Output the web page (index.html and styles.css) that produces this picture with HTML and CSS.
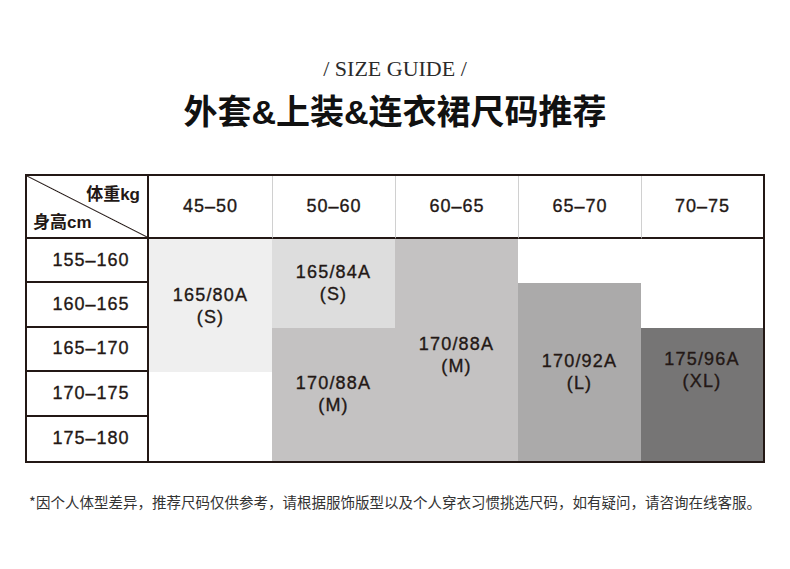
FILE: index.html
```html
<!DOCTYPE html>
<html lang="zh-CN">
<head>
<meta charset="utf-8">
<title>尺码推荐</title>
<link rel="stylesheet" href="styles.css">
</head>
<body>
<div class="page">
  <div class="eyebrow">/ SIZE GUIDE /</div>
  <h1 class="title">外套&amp;上装&amp;连衣裙尺码推荐</h1>

  <div class="table">
    <div class="corner">
      <span class="corner-top">体重kg</span>
      <span class="corner-bottom">身高cm</span>
    </div>
    <div class="head head-first">45–50</div>
    <div class="head">50–60</div>
    <div class="head">60–65</div>
    <div class="head">65–70</div>
    <div class="head">70–75</div>

    <div class="label r2">155–160</div>
    <div class="label r3">160–165</div>
    <div class="label r4">165–170</div>
    <div class="label r5">170–175</div>
    <div class="label r6 last">175–180</div>

    <div class="size s80">165/80A<br>(S)</div>
    <div class="size s84">165/84A<br>(S)</div>
    <div class="size m1">170/88A<br>(M)</div>
    <div class="size m2">170/88A<br>(M)</div>
    <div class="size l">170/92A<br>(L)</div>
    <div class="size xl">175/96A<br>(XL)</div>
  </div>

  <p class="note">*因个人体型差异，推荐尺码仅供参考，请根据服饰版型以及个人穿衣习惯挑选尺码，如有疑问，请咨询在线客服。</p>
</div>
</body>
</html>
```
FILE: styles.css
```css
* { box-sizing: border-box; }
html, body { margin: 0; padding: 0; background: #ffffff; }
body {
  width: 790px;
  height: 569px;
  overflow: hidden;
  color: #231815;
  font-family: "Liberation Sans", "Noto Sans CJK SC", sans-serif;
}
.page {
  padding-top: 57px;
  display: flex;
  flex-direction: column;
  align-items: center;
}
.eyebrow {
  font-family: "Liberation Serif", serif;
  font-size: 22px;
  line-height: 24px;
  color: #2b2b2b;
  font-weight: 400;
}
.title {
  margin: 11px 0 0 0;
  font-family: "Liberation Sans", "Noto Sans CJK SC", sans-serif;
  font-size: 34px;
  line-height: 40px;
  font-weight: 700;
  color: #111111;
}
.table {
  margin-top: 42px;
  width: 740px;
  display: grid;
  grid-template-columns: 122px 123px 123px 123px 123px 122px;
  grid-template-rows: 63px repeat(5, 44.4px);
  border: 2px solid #231815;
}
.corner {
  grid-column: 1;
  grid-row: 1;
  border-right: 2px solid #231815;
  border-bottom: 2px solid #231815;
  background: linear-gradient(to top right, transparent calc(50% - 1px), #231815 50%, transparent calc(50% + 1px));
  display: flex;
  flex-direction: column;
  justify-content: space-between;
  padding: 9px 7px 4px 6px;
  font-size: 17px;
  line-height: 20px;
  font-weight: 700;
}
.corner-top { align-self: flex-end; }
.corner-bottom { align-self: flex-start; }
.num {
  font-size: 18px;
}
.head {
  grid-row: 1;
  border-bottom: 2px solid #231815;
  border-left: 1px solid #d0d0d0;
  display: flex;
  align-items: center;
  justify-content: center;
  font-size: 18px;
  letter-spacing: 1px;
  -webkit-text-stroke: 0.35px #231815;
}
.head-first { border-left: none; }
.label {
  grid-column: 1;
  border-right: 2px solid #231815;
  border-bottom: 2px solid #231815;
  display: flex;
  align-items: center;
  justify-content: center;
  padding-left: 8px;
  font-size: 18px;
  letter-spacing: 1px;
  -webkit-text-stroke: 0.35px #231815;
}
.label.last { border-bottom: none; }
.r2 { grid-row: 2; }
.r3 { grid-row: 3; }
.r4 { grid-row: 4; }
.r5 { grid-row: 5; }
.r6 { grid-row: 6; }
.size {
  display: flex;
  align-items: center;
  justify-content: center;
  text-align: center;
  font-size: 18px;
  line-height: 22px;
  letter-spacing: 1.2px;
  -webkit-text-stroke: 0.35px #231815;
}
.s80 { grid-column: 2; grid-row: 2 / 5; background: #efefef; }
.s84 { grid-column: 3; grid-row: 2 / 4; background: #dddddd; }
.m1 { grid-column: 3; grid-row: 4 / 7; background: #c4c2c2; }
.m2 { grid-column: 4; grid-row: 2 / 7; background: #c4c2c2; padding-top: 10px; }
.l { grid-column: 5; grid-row: 3 / 7; background: #abaaaa; }
.xl { grid-column: 6; grid-row: 4 / 7; background: #767575; padding-bottom: 48px; }
.note {
  margin: 29px 0 0 0;
  font-family: "Noto Sans CJK SC", sans-serif;
  font-size: 14.5px;
  line-height: 20px;
  color: #333333;
  white-space: nowrap;
}
```
